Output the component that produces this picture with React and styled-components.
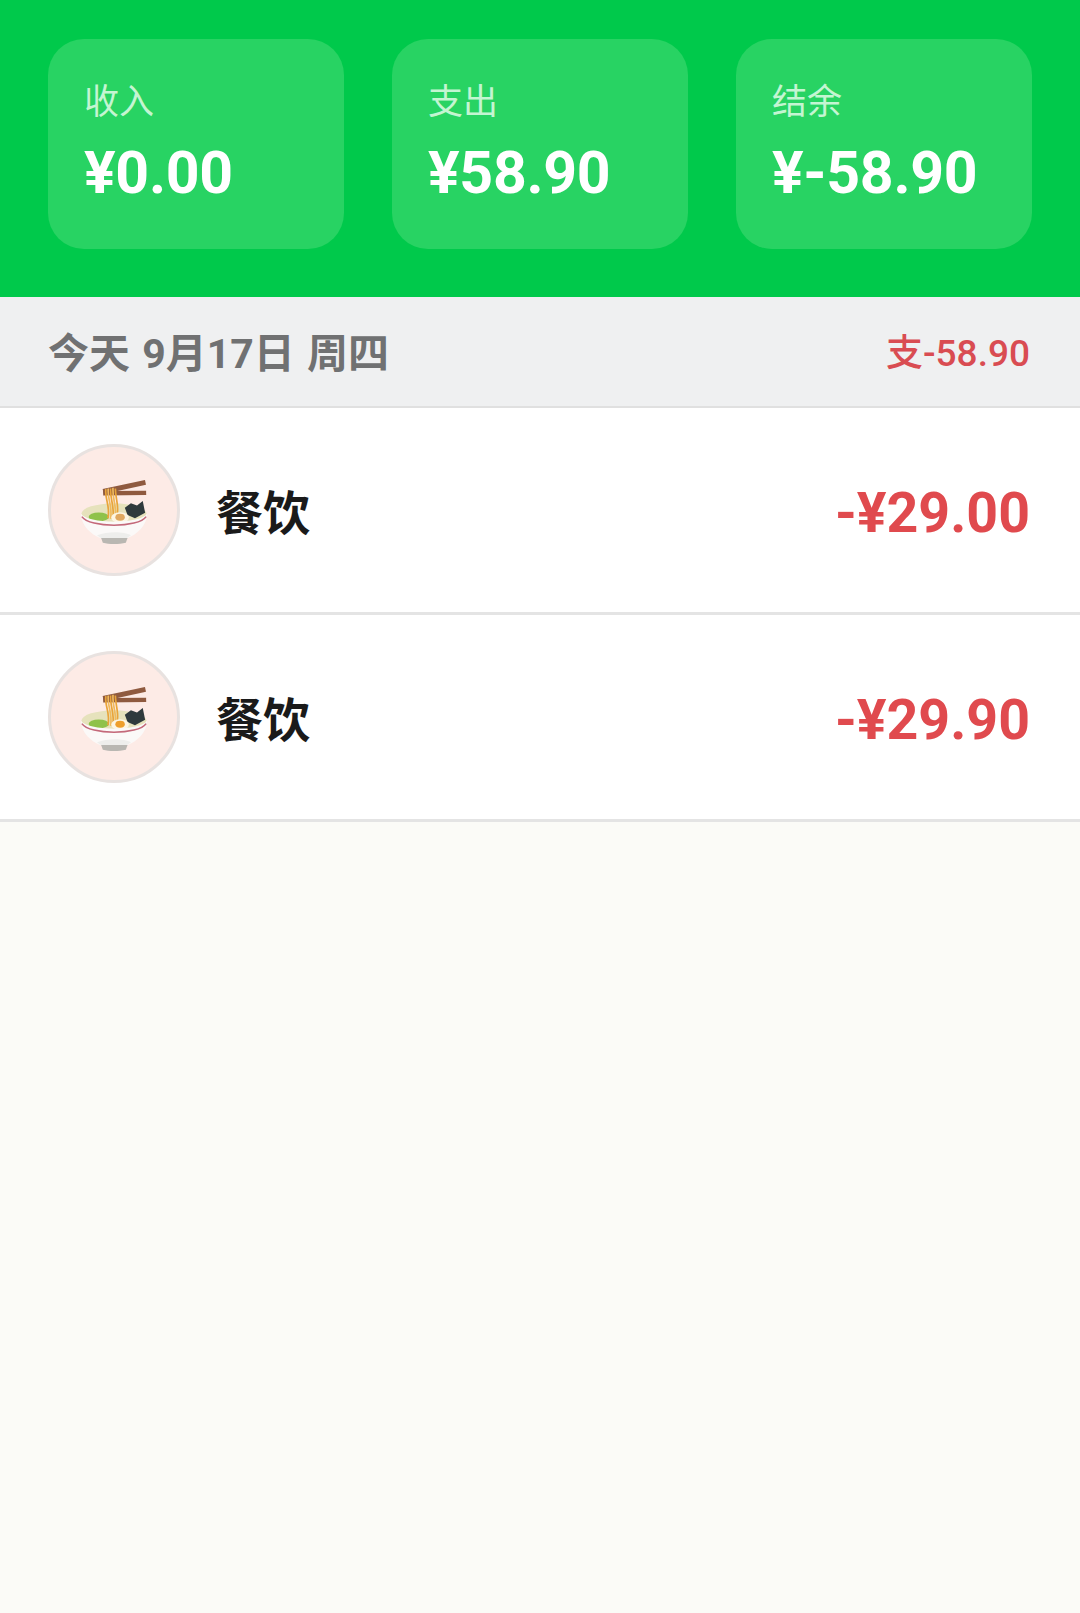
import React from 'react';
import styled, { createGlobalStyle } from 'styled-components';

const GlobalStyle = createGlobalStyle`
    html, body {
        margin: 0;
        padding: 0;
        background: #fbfbf7;
    }
    body {
        font-family: Roboto, "Noto Sans CJK SC", sans-serif;
    }
`;

const Page = styled.div`
    width: 1080px;
    height: 1613px;
    overflow: hidden;
    background: #fbfbf7;
`;

const Header = styled.header`
    height: 297px;
    box-sizing: border-box;
    padding: 39px 48px 0;
    background: #00c94b;
    display: grid;
    grid-template-columns: repeat(3, 296px);
    grid-template-rows: 210px;
    column-gap: 48px;
`;

const SummaryCard = styled.div`
    background: #28d363;
    border-radius: 36px;
    padding: 41px 36px 0;
    color: #fff;
`;

const SummaryLabel = styled.div`
    font-size: 35px;
    line-height: 46px;
    font-weight: 400;
    color: #c4f5d2;
`;

const SummaryValue = styled.div`
    margin-top: 14px;
    font-size: 59px;
    line-height: 66px;
    font-weight: 700;
    letter-spacing: -0.3px;
`;

const DayBar = styled.div`
    height: 111px;
    box-sizing: border-box;
    padding: 0 50px 3px 48px;
    background: #eff0f1;
    border-bottom: 2px solid #e0e0e0;
    display: flex;
    align-items: center;
    justify-content: space-between;
`;

const DayTitle = styled.span`
    font-size: 41px;
    font-weight: 700;
    color: #707172;
    word-spacing: 2px;
`;

const DayTotal = styled.span`
    font-size: 37px;
    font-weight: 500;
    color: #d94c52;
`;

const Row = styled.div`
    height: 207px;
    box-sizing: border-box;
    padding: 0 50px 0 48px;
    background: #fff;
    border-bottom: 3px solid #e4e4e4;
    display: flex;
    align-items: center;
`;

const Avatar = styled.div`
    width: 132px;
    height: 132px;
    box-sizing: border-box;
    border-radius: 50%;
    background: #fdebe6;
    border: 3px solid #e8e2e0;
    display: flex;
    align-items: center;
    justify-content: center;
    flex-shrink: 0;
`;

const RowName = styled.span`
    margin: 0 0 2px 36px;
    flex: 1;
    font-size: 47px;
    font-weight: 700;
    color: #1a1a1a;
`;

const RowAmount = styled.span`
    margin-top: 6px;
    font-size: 55.5px;
    font-weight: 700;
    color: #e04a4e;
`;

const Ramen = styled.svg`
    width: 68px;
    height: 66px;
    margin-top: 4px;
`;

const RamenIcon = ({ yolk }) => (
    <Ramen viewBox="150 150 200 195">
        <path d="M218 187 L343 160" stroke="#8f5a3f" strokeWidth="15" />
        <path d="M218 192 L345 191" stroke="#8f5a3f" strokeWidth="13" />
        <ellipse cx="250" cy="252" rx="96" ry="30" fill="#e6e2bc" />
        <ellipse cx="205" cy="262" rx="30" ry="13" fill="#8fc24a" />
        <g fill="none" strokeWidth="5">
            <path d="M226 180 C222 210 240 230 232 266" stroke="#e9a43a" />
            <path d="M233 178 C230 210 246 230 240 268" stroke="#f0b95c" />
            <path d="M240 178 C238 210 252 230 247 268" stroke="#e9a43a" />
            <path d="M247 176 C245 210 258 230 254 262" stroke="#f0b95c" />
            <path d="M254 178 C254 205 264 225 260 250" stroke="#e9a43a" />
        </g>
        <path d="M282 235 L300 222 L318 228 L335 215 L342 250 L312 266 L290 256Z" fill="#2f3a3d" />
        <ellipse cx="268" cy="264" rx="26" ry="16" fill="#fdf5e2" />
        <ellipse cx="268" cy="263" rx="14" ry="10" fill={yolk} />
        <path d="M152 252 C170 284 330 284 348 252 C346 298 302 322 285 326 L215 326 C198 322 154 298 152 252Z" fill="#fbf9f8" />
        <path d="M200 316 C230 304 280 304 300 316 C294 320 290 324 285 326 L215 326 C210 324 205 320 200 316Z" fill="#eeeeec" />
        <path d="M155 261 C178 295 322 295 345 261" fill="none" stroke="#c4697a" strokeWidth="4.5" />
        <path d="M212 324 L290 324 L285 338 C265 343 235 343 217 338Z" fill="#b9b7b2" />
    </Ramen>
);

const days = [
    { label: '收入', value: '¥0.00' },
    { label: '支出', value: '¥58.90' },
    { label: '结余', value: '¥-58.90' },
];

const items = [
    { name: '餐饮', amount: '-¥29.00', yolk: '#e0a860' },
    { name: '餐饮', amount: '-¥29.90', yolk: '#ee9f2c' },
];

export default function App() {
    return (
        <Page>
            <GlobalStyle />
            <Header>
                {days.map(d => (
                    <SummaryCard key={d.label}>
                        <SummaryLabel>{d.label}</SummaryLabel>
                        <SummaryValue>{d.value}</SummaryValue>
                    </SummaryCard>
                ))}
            </Header>
            <DayBar>
                <DayTitle>今天 9月17日 周四</DayTitle>
                <DayTotal>支-58.90</DayTotal>
            </DayBar>
            {items.map(item => (
                <Row key={item.amount}>
                    <Avatar><RamenIcon yolk={item.yolk} /></Avatar>
                    <RowName>{item.name}</RowName>
                    <RowAmount>{item.amount}</RowAmount>
                </Row>
            ))}
        </Page>
    );
}
